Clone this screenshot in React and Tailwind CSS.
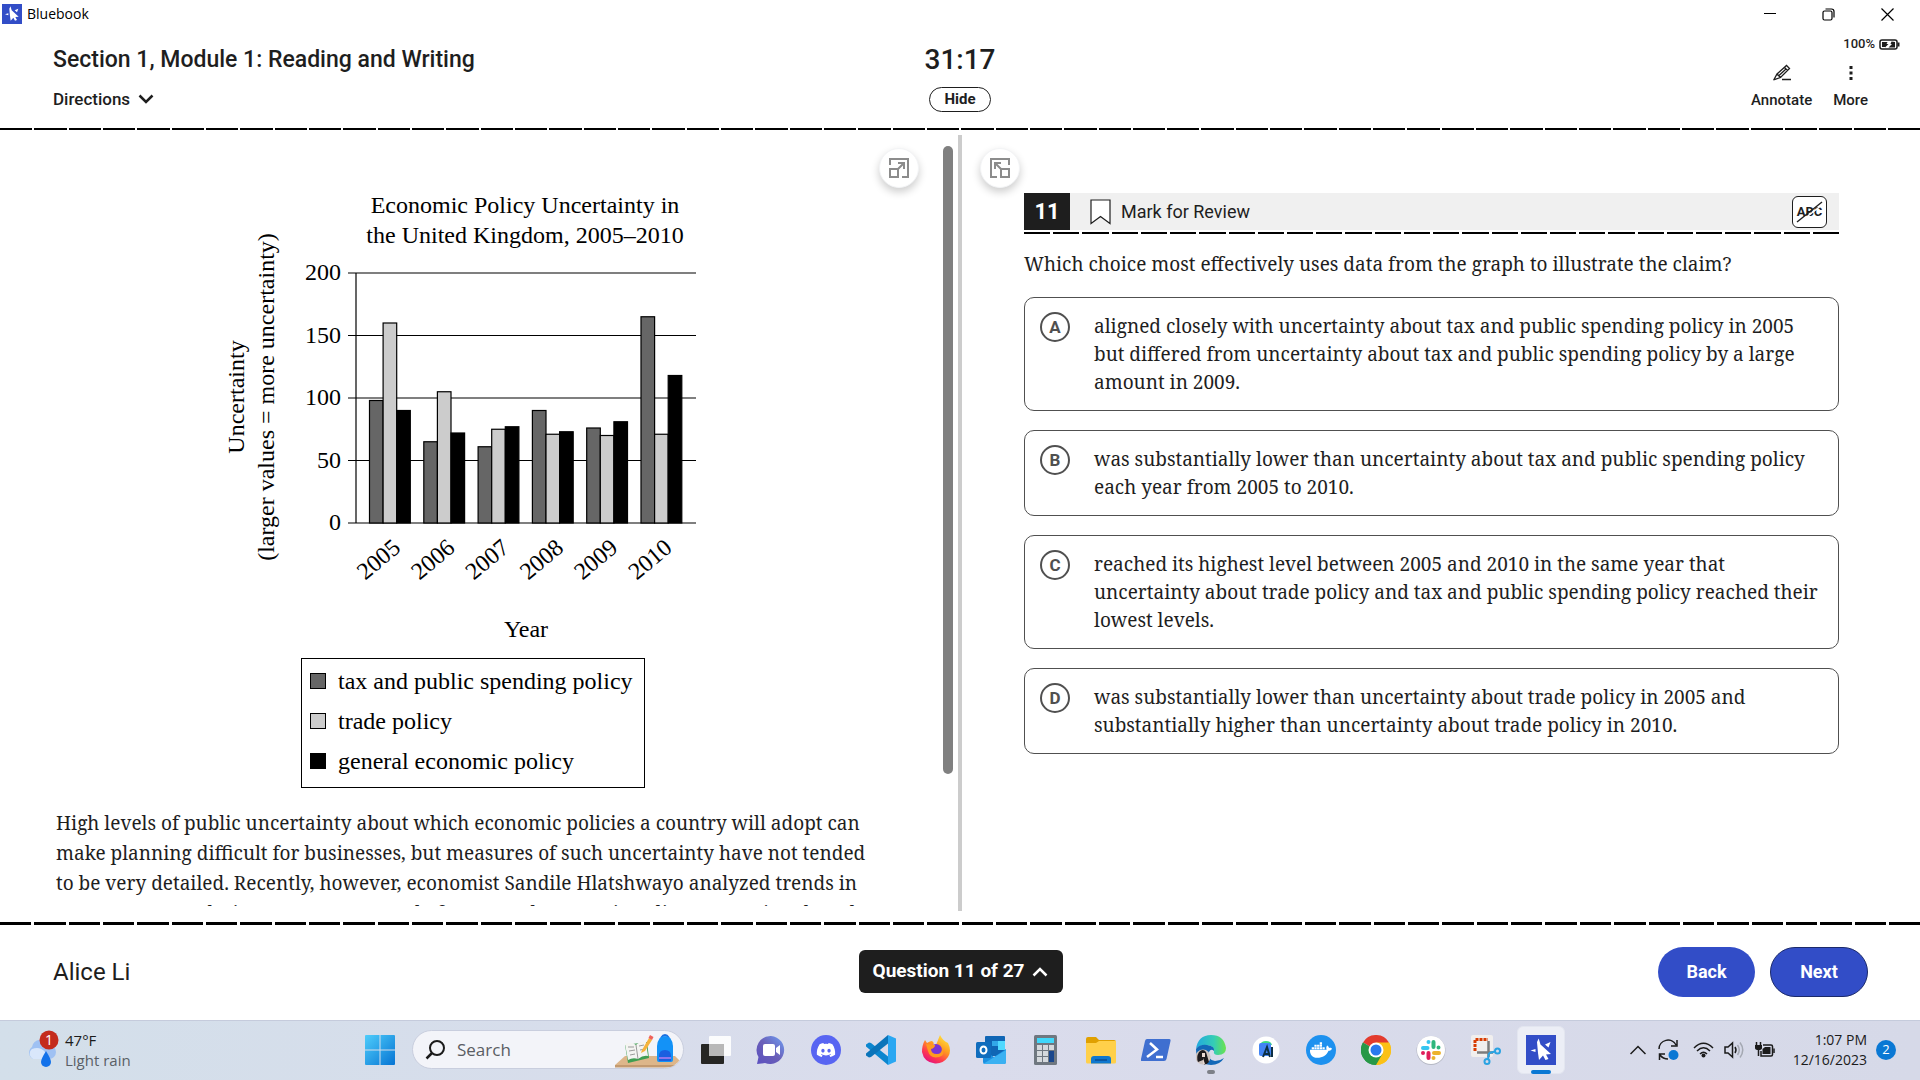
import { FaDiscord, FaDocker } from "react-icons/fa";

const SERIF = "font-['Noto_Serif','Liberation_Serif',serif]";

const choices = [
  { letter: "A", lines: ["aligned closely with uncertainty about tax and public spending policy in 2005", "but differed from uncertainty about tax and public spending policy by a large", "amount in 2009."] },
  { letter: "B", lines: ["was substantially lower than uncertainty about tax and public spending policy", "each year from 2005 to 2010."] },
  { letter: "C", lines: ["reached its highest level between 2005 and 2010 in the same year that", "uncertainty about trade policy and tax and public spending policy reached their", "lowest levels."] },
  { letter: "D", lines: ["was substantially lower than uncertainty about trade policy in 2005 and", "substantially higher than uncertainty about trade policy in 2010."] },
];

const passage = [
  "High levels of public uncertainty about which economic policies a country will adopt can",
  "make planning difficult for businesses, but measures of such uncertainty have not tended",
  "to be very detailed. Recently, however, economist Sandile Hlatshwayo analyzed trends in",
  "news reports to derive measures not only for general economic policy uncertainty but also",
];

const data = [
  ["2005", 98, 160, 90],
  ["2006", 65, 105, 72],
  ["2007", 61, 75, 77],
  ["2008", 90, 71, 73],
  ["2009", 76, 70, 81],
  ["2010", 165, 71, 118],
];
const fills = ["#666666", "#cccccc", "#000000"];

function Dashes({ count, className }) {
  return (
    <div aria-hidden="true" className={`flex shrink-0 ${className}`}>
      {Array.from({ length: count }, (_, i) => (
        <span key={i} className="flex-1 bg-black" />
      ))}
    </div>
  );
}

function Star({ className }) {
  return (
    <svg viewBox="0 0 30 30" className={className} aria-hidden="true">
      <rect width="30" height="30" fill="#324dc7" />
      <path d="M11 7 L12.700 3.500 L14.500 9.500 L25 19 L20 19.500 L22.500 24 L19.500 25 L17 20.500 L13 25 L12 18 Z" fill="#fff" />
      <path d="M4.500 15.500 L9.500 14 V17 Z M24.500 7 L19 9.500 L22.500 12.500 Z" fill="#fff" />
    </svg>
  );
}

function TitleBar() {
  return (
    <div className="flex h-7 shrink-0 items-center justify-between pr-[3px] pl-0.5 text-black">
      <div className="flex items-center gap-[5px]">
        <Star className="size-5" />
        <span className="font-['Open_Sans',sans-serif] text-sm">Bluebook</span>
      </div>
      <div className="flex">
        <button aria-label="Minimize" className="grid h-7 w-[58px] place-items-center">
          <svg width="12" height="12" stroke="#000"><path d="M0 5.500H12" /></svg>
        </button>
        <button aria-label="Restore" className="grid h-7 w-[58px] place-items-center">
          <svg width="13" height="13" fill="none" stroke="#000" strokeWidth="1.200"><rect x="1" y="3" width="9" height="9" rx="1.500" /><path d="M3.500 1H9.500Q12 1 12 3.500V9.500" /></svg>
        </button>
        <button aria-label="Close" className="grid h-7 w-[60px] place-items-center">
          <svg width="13" height="13" stroke="#000" strokeWidth="1.200"><path d="M.5 .5L12.500 12.500M12.500 .5L.5 12.500" /></svg>
        </button>
      </div>
    </div>
  );
}

function Header() {
  return (
    <header className="grid h-[100px] shrink-0 grid-cols-[1fr_auto_1fr] text-[#1e1e1e]">
      <div className="flex flex-col items-start pt-[17px] pl-[53px]">
        <h1 className="text-[23px] leading-[30px] font-medium">Section 1, Module 1: Reading and Writing</h1>
        <button className="mt-3 flex items-center gap-2 text-[17px] leading-6 font-medium">
          Directions
          <svg width="16" height="10" fill="none" stroke="#1e1e1e" strokeWidth="2.500"><path d="M1.500 1.500L8 8L14.500 1.500" /></svg>
        </button>
      </div>
      <div className="flex flex-col items-center pt-[17px]">
        <div className="text-[28px] leading-[30px] font-medium">31:17</div>
        <button className="mt-3 h-[25px] w-[62px] rounded-full border border-[#1e1e1e] text-[15px] leading-none font-bold">Hide</button>
      </div>
      <div className="flex flex-col items-end">
        <div className="mt-2 mr-5 flex items-center gap-1 text-[13px] leading-4 font-medium">
          100%
          <svg width="21" height="11" fill="none" stroke="#1e1e1e">
            <rect x="1" y="1" width="17" height="9" rx="2" strokeWidth="1.500" />
            <path d="M19.500 3.500V7.500" strokeWidth="2" />
            <path d="M3 3H8.500L7.500 5H9.500L6 8.500V8H3ZM12.500 2.500L11.500 5H13L9.500 8.500H16V3Z" fill="#1e1e1e" stroke="none" />
          </svg>
        </div>
        <div className="mt-3 mr-[52px] flex gap-[21px] text-[15px] font-medium">
          <button className="flex flex-col items-center gap-2.5 leading-[18px]">
            <svg width="18" height="17" fill="none" stroke="#1e1e1e" strokeWidth="1.300"><path d="M1 15.500L4 10L13.500 1.500L16.500 4.500L7.500 13.500L1.500 15.500Z M4 10L7.500 13.500 M11.500 3.500L14.500 6.500 M6 11.500L13 5M9 15.500H18" /></svg>
            Annotate
          </button>
          <button className="flex flex-col items-center gap-2.5 leading-[18px]">
            <svg width="4" height="17" fill="#1e1e1e"><path d="M.5 2h3v3h-3zM.5 7.500h3v3h-3zM.5 13h3v3h-3z" /></svg>
            More
          </button>
        </div>
      </div>
    </header>
  );
}

function PaneButton({ flip, className }) {
  return (
    <button aria-label={flip ? "Collapse passage" : "Expand passage"} className={`grid size-10 shrink-0 place-items-center rounded-full border border-gray-100 bg-white shadow-[0_4px_8px_rgba(0,0,0,0.2)] ${className}`}>
      <svg width="20" height="20" fill="none" stroke="#8c8c8c" strokeWidth="2" className={flip ? "-scale-x-100" : ""}>
        <path d="M1 7V1H19V19H13" />
        <rect x="1" y="11" width="8" height="8" />
        <path d="M8 12L15 5M9 5H15V11" />
      </svg>
    </button>
  );
}

function Chart() {
  const y = (v) => 343 - v * 1.25;
  return (
    <svg width="480" height="476" viewBox="0 0 480 476" className="block font-['Liberation_Serif',serif] text-2xl" role="img" aria-label="Economic Policy Uncertainty in the United Kingdom, 2005–2010">
      <g textAnchor="middle">
        <text x="305" y="33">Economic Policy Uncertainty in</text>
        <text x="305" y="63">the United Kingdom, 2005–2010</text>
        <text transform="translate(24 217) rotate(-90)">Uncertainty</text>
        <text transform="translate(54 217) rotate(-90)">(larger values = more uncertainty)</text>
        <text x="306" y="457">Year</text>
      </g>
      {[0, 50, 100, 150, 200].map((v) => (
        <g key={v}>
          <path d={`M128 ${y(v)}H476`} stroke="#000" strokeWidth="1.200" />
          <text x="121" y={y(v) + 7} textAnchor="end">{v}</text>
        </g>
      ))}
      <path d="M136 93V343" stroke="#000" strokeWidth="1.200" />
      {data.map(([year, ...vals], g) => (
        <g key={year}>
          {vals.map((v, i) => (
            <rect key={i} x={149.5 + g * 54.3 + i * 13.6} y={y(v)} width="13.600" height={v * 1.25} fill={fills[i]} stroke="#000" strokeWidth="1.200" />
          ))}
          <text transform={`translate(${182 + g * 54.3} 370) rotate(-40)`} textAnchor="end">{year}</text>
        </g>
      ))}
    </svg>
  );
}

function LegendItem({ swatch, children }) {
  return (
    <li className="flex h-10 items-center gap-3">
      <span className={`size-4 border border-black ${swatch}`} />
      {children}
    </li>
  );
}

function Passage() {
  return (
    <section className="flex min-w-0 overflow-hidden pt-4 pr-[5px]">
      <div className="h-[760px] min-w-0 flex-1 overflow-hidden pl-14">
        <figure className="ml-[164px] pt-[34px]">
          <Chart />
          <ul className="mt-[2px] ml-[81px] w-[344px] border border-black pt-0.5 pb-1.5 pl-2 font-['Liberation_Serif',serif] text-2xl leading-none text-black">
            <LegendItem swatch="bg-[#666]">tax and public spending policy</LegendItem>
            <LegendItem swatch="bg-[#ccc]">trade policy</LegendItem>
            <LegendItem swatch="bg-black">general economic policy</LegendItem>
          </ul>
        </figure>
        <p className={`mt-5 text-[19px] leading-[30px] whitespace-nowrap text-[#1e1e1e] ${SERIF}`}>
          {passage.map((l) => <span key={l} className="block">{l}</span>)}
        </p>
      </div>
      <div className="flex w-[74px] shrink-0 justify-between">
        <PaneButton className="mt-0.5" />
        <div className="h-[628px] w-2.5 rounded-full bg-[#808080]" />
      </div>
    </section>
  );
}

function Question() {
  return (
    <section className="flex min-w-0 pt-4 pl-[18px]">
      <PaneButton flip className="mt-0.5" />
      <div className="ml-1 min-w-0 flex-1 pt-[47px] pr-[81px]">
        <div className="flex h-[37px] items-center bg-[#f0f0f0] text-[#1e1e1e]">
          <div className="grid h-full w-[46px] place-items-center bg-[#1e1e1e] text-[22px] font-bold text-white">11</div>
          <button className="ml-5 flex items-center gap-2.5 text-[18px]">
            <svg width="21" height="26" fill="#fff" stroke="#1e1e1e" strokeWidth="1.200"><path d="M1 1H20V24.500L10.500 17.500L1 24.500Z" /></svg>
            Mark for Review
          </button>
          <button aria-label="Cross out choices" className="relative mr-3 ml-auto grid h-8 w-[35px] place-items-center rounded-md border border-[#1e1e1e] bg-white text-[13px] font-bold">
            <span>ABC</span>
            <svg width="27" height="22" className="absolute" fill="none"><path d="M3 22L27 3" stroke="#fff" strokeWidth="1.500" /><path d="M1 21L26 1" stroke="#1e1e1e" strokeWidth="1.500" /></svg>
          </button>
        </div>
        <Dashes count={28} className="mt-0.5 h-0.5 gap-[3px]" />
        <p className={`mt-4 text-[19px] leading-7 whitespace-nowrap text-[#1e1e1e] ${SERIF}`}>Which choice most effectively uses data from the graph to illustrate the claim?</p>
        <div className="mt-[19px] flex flex-col gap-[19px]">
          {choices.map((c) => (
            <button key={c.letter} className="flex items-start rounded-[10px] border border-[#505050] py-3.5 pl-[15px] text-left">
              <span className="grid size-[30px] shrink-0 place-items-center rounded-full border-2 border-[#505050] text-[17px] leading-none font-bold text-[#505050]">{c.letter}</span>
              <span className={`ml-6 text-[19px] leading-7 whitespace-nowrap text-[#1e1e1e] ${SERIF}`}>
                {c.lines.map((l) => <span key={l} className="block">{l}</span>)}
              </span>
            </button>
          ))}
        </div>
      </div>
    </section>
  );
}

function Footer() {
  return (
    <footer className="grid h-[95px] shrink-0 grid-cols-[1fr_auto_1fr] items-center pr-[52px] pb-0.5 pl-[53px]">
      <div className="text-2xl text-[#1e1e1e]">Alice Li</div>
      <button className="flex h-[43px] w-[204px] items-center justify-center gap-2 rounded-md bg-[#1e1e1e] text-[19px] font-bold whitespace-nowrap text-white">
        Question 11 of 27
        <svg width="16" height="10" fill="none" stroke="#fff" strokeWidth="2.500"><path d="M1.500 8.500L8 2L14.500 8.500" /></svg>
      </button>
      <div className="flex justify-end gap-[15px] text-[18px] font-bold text-white">
        <button className="h-[50px] w-[97px] rounded-full bg-[#324dc7]">Back</button>
        <button className="h-[50px] w-[98px] rounded-full border border-[#1b2a6b] bg-[#324dc7]">Next</button>
      </div>
    </footer>
  );
}

const icons = {
  "Task view": (
    <svg viewBox="0 0 30 30"><rect y="9" width="23" height="20" rx="1" fill="#262624" /><rect x="8" y="1" width="22" height="20" rx="1" fill="#fff" opacity=".9" /><rect x="8" y="9" width="15" height="12" fill="#b8b8b8" /></svg>
  ),
  Chat: (
    <svg viewBox="0 0 30 30"><defs><linearGradient id="chat" x1="0" y1="1" x2="1" y2="0"><stop offset="0" stopColor="#5b50c0" /><stop offset=".5" stopColor="#6a5fb8" /><stop offset="1" stopColor="#6fa0f5" /></linearGradient></defs><path d="M15 1A14 14 0 1 1 9 28L1 29L2.500 22A14 14 0 0 1 15 1Z" fill="url(#chat)" /><rect x="7" y="9" width="12" height="12" rx="2" fill="#fff" /><path d="M20 13L24 10V20L20 17Z" fill="#fff" /></svg>
  ),
  Discord: (
    <span className="grid size-[30px] place-items-center rounded-full bg-[#5865f2]"><FaDiscord className="size-5 text-white" /></span>
  ),
  "Visual Studio Code": (
    <svg viewBox="0 0 30 30"><path d="M22 30L0 11.500V9.500L3 7.500L5 8L22 21.500Z" fill="#0b86cf" /><path d="M22 0L0 18.500V20.500L3 22.500L5 22L22 8.500Z" fill="#0a74ba" /><path d="M22 0L30 3.500V26.500L22 30Z" fill="#2aa7f2" /></svg>
  ),
  Firefox: (
    <svg viewBox="0 0 30 30"><defs><linearGradient id="fx" x1=".9" y1="0" x2=".3" y2="1"><stop offset="0" stopColor="#fff044" /><stop offset=".45" stopColor="#ff9a1f" /><stop offset=".75" stopColor="#ff3b4e" /><stop offset="1" stopColor="#e4127d" /></linearGradient></defs><path d="M4 5L6 8Q9 6 11 6Q14 8 12 10L15 10L19 0Q22 6 27 8Q31 16 27 22Q22 29 14 28.500Q3 27.500 1 17Q1 10 4 5Z" fill="url(#fx)" /><circle cx="15" cy="15" r="6" fill="#7a35d4" /><path d="M5 9L14 10Q14 13 10 14Q10 19 16 19Q21 19 21 13Q25 20 18 22Q9 24 7 16Z" fill="#ff9a1f" /></svg>
  ),
  Outlook: (
    <svg viewBox="0 0 30 30"><rect x="9" y="1" width="20" height="20" rx="1" fill="#1066b5" /><path d="M16 6H29V11H16Z" fill="#32a8e8" /><path d="M22 6H29V15H22Z" fill="#50d9ff" /><path d="M7 15L18 22L30 14V27Q30 29 28 29H9Q7 29 7 27Z" fill="#1c90e0" /><path d="M7 29L30 15V27Q30 29 28 29Z" fill="#3bb1f2" /><rect y="7" width="15" height="16" rx="1.500" fill="#0f6cbd" /><ellipse cx="7.500" cy="15" rx="3" ry="3.500" fill="none" stroke="#fff" strokeWidth="2" /></svg>
  ),
  Calculator: (
    <svg viewBox="0 0 30 30"><rect x="3" width="23" height="30" rx="1.500" fill="#6f7780" /><rect x="6" y="3" width="17" height="5" fill="#40d8fb" /><path d="M6 10h5v5H6zM12 10h5v5h-5zM18 10h5v5h-5zM6 16h5v5H6zM12 16h5v5h-5zM6 22h5v5H6zM12 22h5v5h-5z" fill="#d5d9dd" /><path d="M18 16h5v11h-5z" fill="#1b478c" /></svg>
  ),
  "File Explorer": (
    <svg viewBox="0 0 30 30"><path d="M0 8V4Q0 2 2 2H10L13 5H28Q30 5 30 7V9Z" fill="#e0a000" /><path d="M0 8H10L13 6H30V27Q30 28.500 28.500 28.500H1.500Q0 28.500 0 27Z" fill="#ffd04a" /><path d="M5 28.500V24Q5 21 8 21H22Q25 21 25 24V28.500Z" fill="#0f78cf" /><path d="M9 25H21" stroke="#0a4d93" strokeWidth="1.500" /></svg>
  ),
  PowerShell: (
    <svg viewBox="0 0 30 30"><path d="M6 4H28Q30 4 29.500 6L25.500 24Q25 26 23 26H1Q-1 26 0 24L4 6Q4.500 4 6 4Z" fill="#3f6fd0" /><path d="M9 8L16 14.500L6 22" fill="none" stroke="#fff" strokeWidth="2.500" /><path d="M15 22H22" stroke="#fff" strokeWidth="2.500" /></svg>
  ),
  Edge: (
    <svg viewBox="0 0 30 30"><defs><linearGradient id="eg"><stop offset="0" stopColor="#22a9e0" /><stop offset=".6" stopColor="#35cdb5" /><stop offset="1" stopColor="#6be34c" /></linearGradient></defs><path d="M0 14Q2 0 15 0Q28 0 30 13Q30 20 22 20Q17 20 18 16Q18 10 10 10Q3 10 0 14Z" fill="url(#eg)" /><path d="M0 14Q4 9 11 10Q19 11 18 16Q15 13 13 17Q11 25 19 26Q24 26 28 23Q24 30 15 30Q0 29 0 14Z" fill="#1368b8" /><circle cx="7" cy="22" r="7.500" fill="#cfc4c0" /><path d="M3 17Q7 13 10 17L13 27Q11 29.500 8 29.500L7 25L2 27Q0 22 3 17Z" fill="#1d1a1d" /><path d="M6 18h3v4H6zM7 23L9 29H7Z" fill="#e9d8d0" /></svg>
  ),
  "Android Studio": (
    <svg viewBox="0 0 30 30"><circle cx="15" cy="15" r="13.500" fill="#fff" /><path d="M9 10Q10 6 15 6Q20 6 21 10Z" fill="#3ddc84" /><rect x="8" y="8" width="12" height="13" rx="2" fill="#4285f4" /><path d="M12 22L16 12L19 22M14 19H18M21 12V22" fill="none" stroke="#0c2f45" strokeWidth="2" /></svg>
  ),
  Docker: (
    <span className="grid size-[30px] place-items-center rounded-full bg-[#1d91ef]"><FaDocker className="size-[22px] text-white" /></span>
  ),
  Chrome: (
    <svg viewBox="0 0 30 30"><path d="M15 15L2 7.500A15 15 0 0 1 28 7.500Z" fill="#e33b2e" /><path d="M15 15L28 7.500A15 15 0 0 1 15 30Z" fill="#fbc116" /><path d="M15 15L15 30A15 15 0 0 1 2 7.500Z" fill="#279847" /><path d="M15 7.500H28A15 15 0 0 1 15 30L21.500 18.500Z" fill="#fbc116" /><path d="M15 30L21.500 18.750L8.500 18.750L2 7.500A15 15 0 0 0 15 30Z" fill="#279847" /><circle cx="15" cy="15" r="7.500" fill="#fff" /><circle cx="15" cy="15" r="5.500" fill="#2a79ee" /></svg>
  ),
  Slack: (
    <svg viewBox="0 0 30 30"><circle cx="15" cy="15.500" r="14.500" fill="#b5b8c4" /><circle cx="15" cy="15" r="14" fill="#fff" /><g strokeWidth="4" strokeLinecap="round"><path d="M7 13H11.500M12.500 7V7.100" stroke="#36c5f0" /><path d="M17.500 7V12M22.500 12.500V12.600" stroke="#2eb67d" /><path d="M18 18H23M17.500 23V23.100" stroke="#ecb22e" /><path d="M12.500 18V23M7 18V18.100" stroke="#e01e5a" /></g></svg>
  ),
  "Snipping Tool": (
    <svg viewBox="0 0 30 30"><rect width="22" height="22" rx="2" fill="#f1efee" /><path d="M4 16V4.500H17" fill="none" stroke="#d83b01" strokeWidth="3" strokeDasharray="3 1" /><path d="M17.500 6V22M6 17.500H22" stroke="#7c7c7c" strokeWidth="2.500" /><circle cx="16" cy="26.500" r="2.500" fill="none" stroke="#2aa3e2" strokeWidth="2" /><circle cx="26.500" cy="16" r="2.500" fill="none" stroke="#2aa3e2" strokeWidth="2" /><path d="M18 18L17 24M18 18L24 16.500" stroke="#2aa3e2" strokeWidth="2" /></svg>
  ),
  Bluebook: <Star className="size-[30px]" />,
};

function Taskbar() {
  return (
    <nav aria-label="Taskbar" className="grid h-[60px] shrink-0 grid-cols-[1fr_auto_1fr] items-center border-t border-[#c5cbdc] bg-linear-to-r from-[#d3dfea] via-[#dadcec] to-[#d6d9e8] pb-0.5 font-['Open_Sans',sans-serif]">
      <button className="flex items-center gap-1.5 pl-[25px] text-left text-[15px] leading-5 text-[#1b1b1b]">
        <svg width="34" height="40" viewBox="0 0 34 40" aria-hidden="true">
          <path d="M8 29A7 7 0 0 1 7 17A9 9 0 0 1 24 15A7 7 0 0 1 24 29Z" fill="#9fc1f3" />
          <path d="M8 29A6 6 0 0 1 7 19Q15 16 20 22L24 29Z" fill="#d9e7fb" />
          <path d="M21 21Q26 29 26 32A5 5 0 0 1 16 32Q16 29 21 21Z" fill="#1372ea" />
          <circle cx="24" cy="10" r="9.500" fill="#c42b1c" />
          <text x="24" y="15" textAnchor="middle" fontSize="14" fill="#fff">1</text>
        </svg>
        <span>
          <span className="block">47°F</span>
          <span className="block text-[#5a5f66]">Light rain</span>
        </span>
      </button>
      <div className="flex items-center">
        <button aria-label="Start" className="grid w-[55px] place-items-center">
          <svg width="30" height="30" viewBox="0 0 30 30"><defs><linearGradient id="win" x2="1" y2="1"><stop offset="0" stopColor="#4fcdfb" /><stop offset="1" stopColor="#0674d3" /></linearGradient></defs><path d="M0 1Q0 0 1 0H14.500V14.500H0ZM15.500 0H29Q30 0 30 1V14.500H15.500ZM0 15.500H14.500V30H1Q0 30 0 29ZM15.500 15.500H30V29Q30 30 29 30H15.500Z" fill="url(#win)" /></svg>
        </button>
        <label className="mr-1 ml-[5px] flex h-[39px] w-[272px] items-center overflow-hidden rounded-full border border-[#c9cede] bg-[#f3f4f9] pl-3">
          <svg width="20" height="20" viewBox="0 0 20 20" fill="none" stroke="#1b1b1b" strokeWidth="2"><circle cx="12" cy="8" r="7" /><path d="M7 13L1.500 18.500" strokeWidth="2.500" /></svg>
          <input aria-label="Search" placeholder="Search" className="ml-3 w-0 flex-1 bg-transparent text-[17px] outline-none placeholder:text-[#5a5d63]" />
          <svg width="66" height="36" viewBox="0 0 66 36" className="mr-0.5 shrink-0" aria-hidden="true">
            <path d="M10 24H60L66 30L62 35H0V33Z" fill="#ddb68a" /><path d="M0 33H64L62 35.500H0Z" fill="#c39a70" />
            <path d="M10 13L32 10L34 26L13 31Z" fill="#3f9e52" /><path d="M10 12Q16 9 21 13Q25 9 31 10L33 24Q28 23 23 27Q18 25 13 28Z" fill="#f4f4f2" /><path d="M21 13L23 27M13 15L19 15M14 19L20 18M15 23L20 22M24 14L29 13M25 18L30 17" stroke="#9a9a9a" fill="none" />
            <path d="M27 18L34 6L37 8L30 19L26 21Z" fill="#f6b33c" /><path d="M33.500 6L35 3L38.500 5L37 8Z" fill="#f0625a" />
            <path d="M46 6Q50 0 54 6" fill="none" stroke="#1b6fe0" strokeWidth="2" /><path d="M42 14Q43 4 50 4Q57 4 58 14V28Q58 30 56 30H44Q42 30 42 28Z" fill="#1392f7" /><path d="M44 24Q44 18 50 18Q56 18 56 24V29H44Z" fill="#1a5fe0" /><path d="M44 26H56" stroke="#b57cf0" strokeWidth="1.500" />
          </svg>
        </label>
        {Object.entries(icons).map(([name, icon]) => (
          <button key={name} aria-label={name} className="relative grid h-12 w-[55px] place-items-center">
            {name === "Bluebook" && <span className="absolute inset-y-0 w-12 rounded-md border border-[#e3e6f0] bg-[#eceef6]" />}
            <span className="relative size-[30px] [&>svg]:size-[30px]">{icon}</span>
            {name === "Bluebook" && <span className="absolute bottom-0 h-1 w-5 rounded-full bg-[#0a78d4]" />}
            {name === "Edge" && <span className="absolute bottom-0 h-1 w-2 rounded-full bg-[#7d8088]" />}
          </button>
        ))}
      </div>
      <div className="flex items-center justify-end pr-6 text-[#1b1b1b]">
        <button aria-label="Show hidden icons" className="mr-3"><svg width="16" height="10" fill="none" stroke="#1b1b1b" strokeWidth="1.500"><path d="M.5 9L8 1.500L15.500 9" /></svg></button>
        <button aria-label="Updates" className="mr-3.5"><svg width="21" height="22" fill="none" stroke="#1b1b1b" strokeWidth="1.500"><path d="M1 10A9 9 0 0 1 18 6M19 1V7H13M1.500 21V15H7M2 16Q5 20 10 20" /><circle cx="15.500" cy="16" r="5" fill="#0a78d4" stroke="none" /></svg></button>
        <button aria-label="Wi-Fi" className="mr-2.5"><svg width="21" height="16" fill="none" stroke="#1b1b1b" strokeWidth="1.500"><path d="M1 6Q10.500 -3.500 20 6M4 9Q10.500 2.500 17 9M7 12Q10.500 8.500 14 12" /><circle cx="10.500" cy="13.500" r="2" fill="#1b1b1b" stroke="none" /></svg></button>
        <button aria-label="Volume" className="mr-2.5"><svg width="20" height="18" fill="none" stroke="#1b1b1b" strokeWidth="1.500"><path d="M1 6H4L8.500 2V16L4 12H1Z" /><path d="M11 6Q13 9 11 12" /><path d="M13.500 4Q17 9 13.500 14M16 1.500Q21.500 9 16 16.500" stroke="#a4a8b2" /></svg></button>
        <button aria-label="Battery" className="mr-[17px]"><svg width="22" height="18" fill="none" stroke="#1b1b1b" strokeWidth="1.500"><path d="M9 4H17Q18.500 4 18.500 5.500V13.500Q18.500 15 17 15H7V10" /><path d="M8.500 12V8L11 6H16.500V13H8.500ZM1 4H8V7Q8 9 4.500 9Q1 9 1 7Z" fill="#1b1b1b" stroke="none" /><path d="M2.500 1V4M6.500 1V4M4.500 8V15M20 7.500V12" /></svg></button>
        <button className="mr-[9px] text-right text-sm leading-5"><span className="block">1:07 PM</span><span className="block">12/16/2023</span></button>
        <span className="grid size-5 place-items-center rounded-full bg-[#0a78d4] text-[13px] leading-none text-white">2</span>
      </div>
    </nav>
  );
}

export default function App() {
  return (
    <div className="flex h-screen flex-col overflow-hidden bg-white font-['Roboto',sans-serif]">
      <TitleBar />
      <Header />
      <Dashes count={56} className="h-0.5 gap-0.5" />
      <main className="grid min-h-0 flex-1 grid-cols-[1fr_4px_1fr] overflow-hidden pb-[11px]">
        <Passage />
        <div className="mt-[5px] bg-[#ccc]" />
        <Question />
      </main>
      <Dashes count={56} className="h-[3px] gap-[3px]" />
      <Footer />
      <Taskbar />
    </div>
  );
}
